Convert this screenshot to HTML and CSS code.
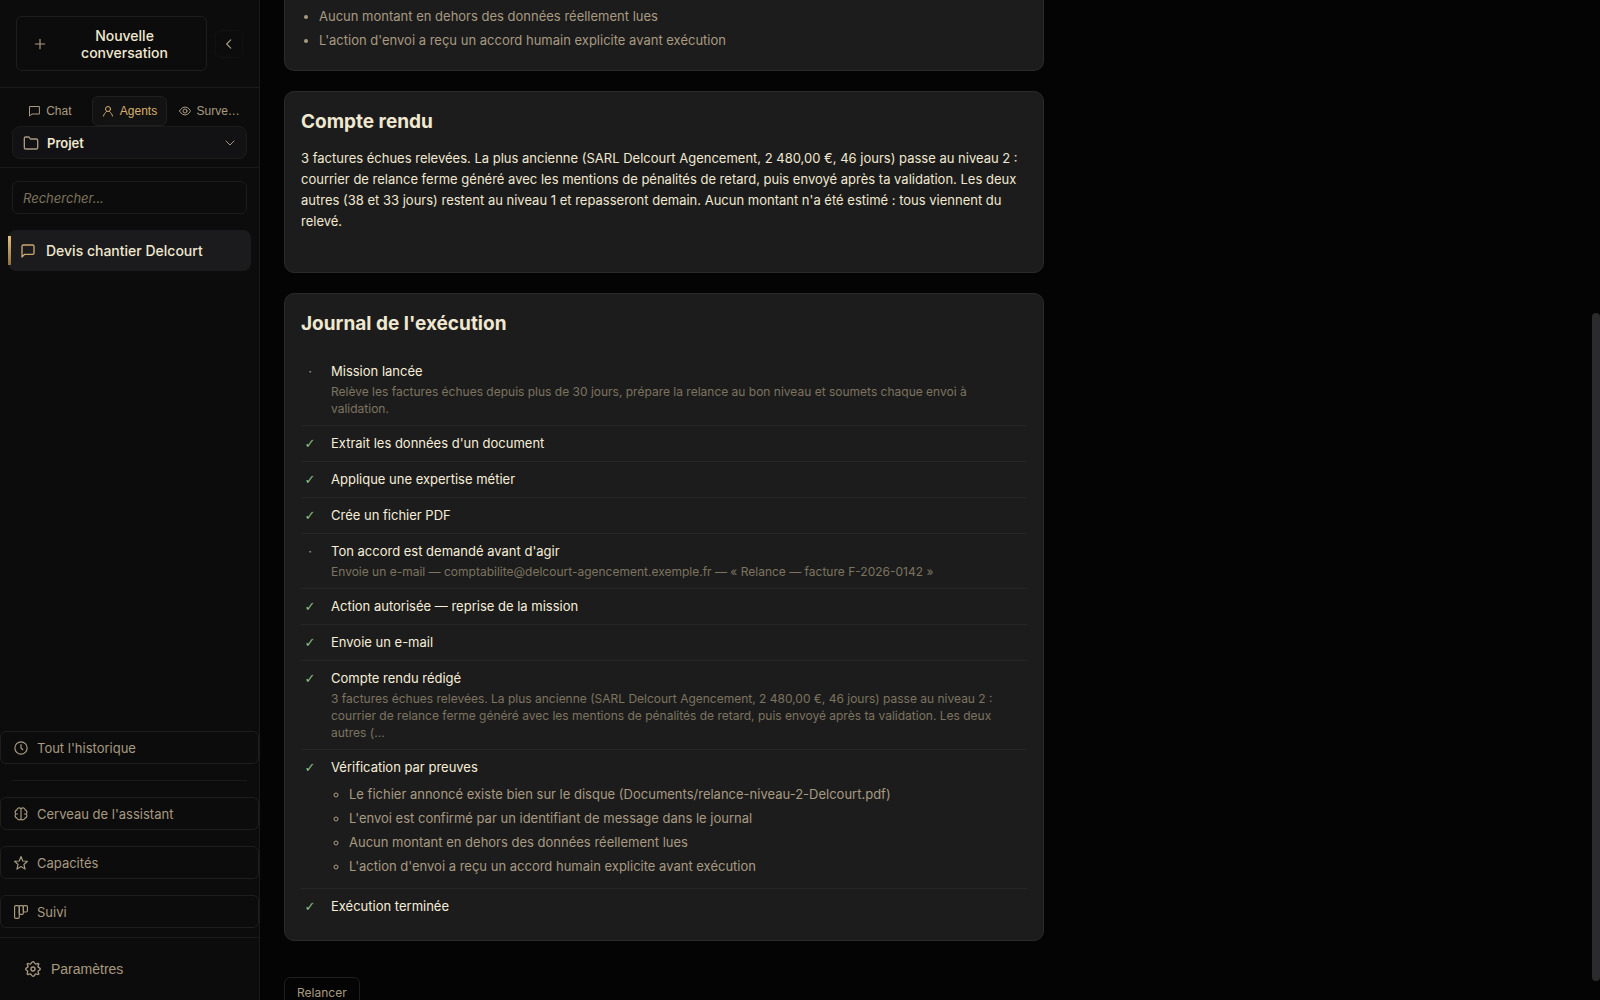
FILE: index.html
```html
<!DOCTYPE html>
<html lang="fr">
<head>
    <meta charset="UTF-8">
    <meta name="viewport" content="width=device-width, initial-scale=1.0">
    <title>Agents - Compte rendu</title>
    <link rel="stylesheet" href="styles.css">
</head>
<body>
    <aside class="sidebar">
        <div class="sidebar-header">
            <button class="new-chat" type="button">
                <svg class="icon" viewBox="0 0 24 24"><path d="M12 4v16M4 12h16"/></svg>
                <span>Nouvelle conversation</span>
            </button>
            <button class="collapse" type="button" aria-label="Réduire">
                <svg class="icon" viewBox="0 0 24 24"><path d="M15 5l-7 7 7 7"/></svg>
            </button>
        </div>

        <div class="sidebar-modes">
            <nav class="tabs">
                <button class="tab" type="button">
                    <svg class="icon" viewBox="0 0 24 24"><path d="M22 3H3v19l5-4h14z"/></svg>
                    <span>Chat</span>
                </button>
                <button class="tab active" type="button">
                    <svg class="icon" viewBox="0 0 24 24"><circle cx="12" cy="8" r="5"/><path d="M3 22c1-4 3-6 6-9M21 22c-1-4-3-6-6-9"/></svg>
                    <span>Agents</span>
                </button>
                <button class="tab" type="button">
                    <svg class="icon" viewBox="0 0 24 24"><path d="M1 12s4-8 11-8 11 8 11 8-4 8-11 8S1 12 1 12z"/><circle cx="12" cy="12" r="4"/></svg>
                    <span>Surve…</span>
                </button>
            </nav>
            <button class="project" type="button">
                <svg class="icon" viewBox="0 0 24 24"><path d="M22 19a2 2 0 0 1-2 2H4a2 2 0 0 1-2-2V5a2 2 0 0 1 2-2h5l2 3h9a2 2 0 0 1 2 2z"/></svg>
                <span>Projet</span>
                <svg class="icon chevron" viewBox="0 0 24 24"><path d="M4 8l8 8 8-8"/></svg>
            </button>
        </div>

        <input class="search" type="text" placeholder="Rechercher..." aria-label="Rechercher">

        <a class="conversation" href="#">
            <svg class="icon" viewBox="0 0 24 24"><path d="M21 15a2 2 0 0 1-2 2H7l-4 4V5a2 2 0 0 1 2-2h14a2 2 0 0 1 2 2z"/></svg>
            <span>Devis chantier Delcourt</span>
        </a>

        <div class="sidebar-links">
            <button class="side-link" type="button">
                <svg class="icon" viewBox="0 0 24 24"><circle cx="12" cy="12" r="10.5"/><path d="M12 6v6l3 3"/></svg>
                Tout l'historique
            </button>
            <hr>
            <button class="side-link" type="button">
                <svg class="icon" viewBox="0 0 24 24"><path d="M12 3v18M12 3C9 0 5 2 5 5 2 6 1 9 3 12c-2 3-1 6 2 7 1 3 5 4 7 2M12 3c3-3 7-1 7 2 3 1 4 4 2 7 2 3 1 6-2 7-1 3-5 4-7 2M3 12h3M18 12h3"/></svg>
                Cerveau de l'assistant
            </button>
            <button class="side-link" type="button">
                <svg class="icon" viewBox="0 0 24 24"><path d="M12 1l3 7.500 8 .5-6 5.500 2 8-7-4.500-7 4.500 2-8L1 9l8-.5z"/></svg>
                Capacités
            </button>
            <button class="side-link" type="button">
                <svg class="icon" viewBox="0 0 24 24"><rect x="1" y="1" width="8" height="22" rx="2"/><rect x="9" y="1" width="7" height="15" rx="2"/><rect x="16" y="1" width="7" height="11" rx="2"/></svg>
                Suivi
            </button>
        </div>

        <div class="sidebar-footer">
            <button class="settings" type="button">
                <svg class="icon" viewBox="0 0 24 24"><circle cx="12" cy="12" r="3"/><path d="M12 1c2 0 2 3 4 3.500s3.500-1.500 4.500-.5S19 7 19.500 8.500 23 10 23 12s-3 2-3.500 3.500 2 3.500 1 4.500-3-1-4.500-.5S14 23 12 23s-2-3-4-3.500-3.500 1.500-4.500.5 1-3 .5-4.500S1 14 1 12s3-2 3.500-3.500-2-3.500-1-4.500 3 1 4.500.5S10 1 12 1z"/></svg>
                Paramètres
            </button>
        </div>
    </aside>

    <main class="content">
        <section class="card card-cut">
            <ul class="proofs">
                <li>Aucun montant en dehors des données réellement lues</li>
                <li>L'action d'envoi a reçu un accord humain explicite avant exécution</li>
            </ul>
        </section>

        <section class="card">
            <h2>Compte rendu</h2>
            <p class="report">3 factures échues relevées. La plus ancienne (SARL Delcourt Agencement, 2 480,00 €, 46 jours) passe au niveau 2 : courrier de relance ferme généré avec les mentions de pénalités de retard, puis envoyé après ta validation. Les deux autres (38 et 33 jours) restent au niveau 1 et repasseront demain. Aucun montant n'a été estimé : tous viennent du relevé.</p>
        </section>

        <section class="card">
            <h2>Journal de l'exécution</h2>
            <ul class="log">
                <li>
                    <span class="mark">·</span>
                    <div>
                        <div class="step">Mission lancée</div>
                        <div class="detail">Relève les factures échues depuis plus de 30 jours, prépare la relance au bon niveau et soumets chaque envoi à validation.</div>
                    </div>
                </li>
                <li>
                    <span class="mark ok">✓</span>
                    <div class="step">Extrait les données d'un document</div>
                </li>
                <li>
                    <span class="mark ok">✓</span>
                    <div class="step">Applique une expertise métier</div>
                </li>
                <li>
                    <span class="mark ok">✓</span>
                    <div class="step">Crée un fichier PDF</div>
                </li>
                <li>
                    <span class="mark">·</span>
                    <div>
                        <div class="step">Ton accord est demandé avant d'agir</div>
                        <div class="detail">Envoie un e-mail — comptabilite@delcourt-agencement.exemple.fr — « Relance — facture F-2026-0142 »</div>
                    </div>
                </li>
                <li>
                    <span class="mark ok">✓</span>
                    <div class="step">Action autorisée — reprise de la mission</div>
                </li>
                <li>
                    <span class="mark ok">✓</span>
                    <div class="step">Envoie un e-mail</div>
                </li>
                <li>
                    <span class="mark ok">✓</span>
                    <div>
                        <div class="step">Compte rendu rédigé</div>
                        <div class="detail">3 factures échues relevées. La plus ancienne (SARL Delcourt Agencement, 2 480,00 €, 46 jours) passe au niveau 2 : courrier de relance ferme généré avec les mentions de pénalités de retard, puis envoyé après ta validation. Les deux autres (…</div>
                    </div>
                </li>
                <li>
                    <span class="mark ok">✓</span>
                    <div>
                        <div class="step">Vérification par preuves</div>
                        <ul class="proofs">
                            <li>Le fichier annoncé existe bien sur le disque (Documents/relance-niveau-2-Delcourt.pdf)</li>
                            <li>L'envoi est confirmé par un identifiant de message dans le journal</li>
                            <li>Aucun montant en dehors des données réellement lues</li>
                            <li>L'action d'envoi a reçu un accord humain explicite avant exécution</li>
                        </ul>
                    </div>
                </li>
                <li>
                    <span class="mark ok">✓</span>
                    <div class="step">Exécution terminée</div>
                </li>
            </ul>
        </section>

        <button class="rerun" type="button">Relancer</button>
        <div class="scroll-thumb"></div>
    </main>
</body>
</html>
```
FILE: styles.css
```css
* {
    box-sizing: border-box;
}
body {
    margin: 0;
    display: flex;
    height: 100vh;
    overflow: hidden;
    background: #040404;
    color: #f0e8d0;
    font-family: Inter, sans-serif;
    font-size: 13px;
}
button {
    background: none;
    border: 1px solid #1e1e1d;
    border-radius: 6px;
    color: #a89a80;
    font-family: inherit;
    cursor: pointer;
}
.icon {
    width: 14px;
    height: 14px;
    flex-shrink: 0;
    fill: none;
    stroke: currentColor;
    stroke-width: 2;
    stroke-linecap: round;
    stroke-linejoin: round;
}

/* Sidebar */
.sidebar {
    width: 260px;
    flex-shrink: 0;
    display: flex;
    flex-direction: column;
    background: #0c0c0c;
    border-right: 1px solid #1a1a1a;
}
.sidebar-header {
    display: flex;
    align-items: center;
    gap: 8px;
    padding: 16px;
    border-bottom: 1px solid #1c1c1c;
}
.new-chat {
    flex: 1;
    height: 55px;
    display: flex;
    align-items: center;
    gap: 12px;
    padding: 0 16px;
    color: #f0e8d0;
    font-size: 14px;
    font-weight: 500;
    line-height: 17px;
}
.new-chat span {
    flex: 1;
}
.new-chat .icon {
    color: #a89a80;
}
.collapse {
    width: 28px;
    height: 28px;
    padding: 0;
    border-color: #121212;
}
.collapse .icon {
    display: block;
    margin: 0 auto;
}
.sidebar-modes {
    padding: 8px 12px;
    border-bottom: 1px solid #1a1a1a;
}
.tabs {
    display: flex;
    gap: 4px;
}
.tab {
    flex: 1;
    min-width: 0;
    height: 30px;
    display: flex;
    align-items: center;
    justify-content: center;
    gap: 6px;
    padding: 0 6px;
    border-color: transparent;
    font-family: "Liberation Sans", Arial, sans-serif;
    font-size: 12px;
    white-space: nowrap;
}
.tab .icon {
    width: 12px;
    height: 12px;
}
.tab.active {
    background: #121212;
    border-color: #202020;
    color: #d8ae6c;
}
.project {
    width: 100%;
    height: 33px;
    display: flex;
    align-items: center;
    gap: 8px;
    padding: 0 10px;
    background: #121214;
    border-color: #1c1c1c;
    border-radius: 8px;
    color: #f0e8d0;
    font-size: 13px;
    font-weight: 600;
}
.project .icon {
    width: 16px;
    height: 16px;
    color: #a89a80;
}
.project .chevron {
    width: 12px;
    height: 12px;
    margin-left: auto;
}
.search {
    height: 33px;
    margin: 13px 12px 16px;
    padding: 0 10px;
    background: none;
    border: 1px solid #1c1c1c;
    border-radius: 6px;
    color: #f0e8d0;
    font-family: inherit;
    font-size: 13px;
}
.search::placeholder {
    color: #7d745c;
    font-style: italic;
}
.conversation {
    position: relative;
    height: 41px;
    display: flex;
    align-items: center;
    gap: 10px;
    margin: 0 8px;
    padding: 0 12px;
    background: #1b1b1d;
    border-radius: 8px;
    color: #f0e8d0;
    font-size: 14px;
    font-weight: 500;
    text-decoration: none;
}
.conversation::before {
    content: "";
    position: absolute;
    left: 0;
    top: 6px;
    bottom: 6px;
    width: 3px;
    background: linear-gradient(#e6bf7c, #8f7040);
}
.conversation .icon {
    width: 16px;
    height: 16px;
    color: #c9a873;
}
.sidebar-links {
    display: flex;
    flex-direction: column;
    gap: 16px;
    margin-top: auto;
    padding-bottom: 9px;
}
.sidebar-links hr {
    width: calc(100% - 24px);
    margin: 0 auto;
    border: 0;
    border-top: 1px solid #1a1a1a;
}
.side-link {
    height: 33px;
    display: flex;
    align-items: center;
    gap: 9px;
    padding: 0 13px;
    font-size: 13px;
}
.sidebar-footer {
    padding: 12px;
    border-top: 1px solid #1a1a1a;
}
.settings {
    height: 38px;
    display: flex;
    align-items: center;
    gap: 10px;
    padding: 0 13px;
    border: 0;
    font-family: "Liberation Sans", Arial, sans-serif;
    font-size: 14px;
}
.settings .icon {
    width: 16px;
    height: 16px;
}

/* Content */
.content {
    position: relative;
    flex: 1;
    padding: 0 24px;
    overflow: hidden;
}
.card {
    max-width: 760px;
    margin-bottom: 20px;
    padding: 16px;
    background: #1c1c1d;
    border: 1px solid #2a2a2a;
    border-radius: 10px;
}
.card-cut {
    padding-top: 6px;
    border-top: 0;
    border-radius: 0 0 10px 10px;
}
h2 {
    margin: 0 0 12px;
    font-size: 19px;
    font-weight: 700;
    line-height: 28px;
}
.report {
    margin: 0 0 24px;
    line-height: 21px;
}
.proofs {
    margin: 0;
    padding-left: 18px;
    color: #a89a80;
    line-height: 20px;
}
.proofs li {
    margin-bottom: 4px;
}
.card-cut .proofs {
    margin-bottom: 4px;
}
.log {
    margin: 16px 0 0;
    padding: 0;
    list-style: none;
}
.log > li {
    display: flex;
    gap: 12px;
    padding: 8px 0;
    border-bottom: 1px solid #262627;
    line-height: 19px;
}
.log > li:last-child {
    border-bottom: 0;
}
.log .proofs {
    margin-top: 7px;
    list-style: circle;
}
.mark {
    width: 18px;
    flex-shrink: 0;
    color: #a89a80;
    text-align: center;
}
.mark.ok {
    color: #8cc084;
    font-family: "DejaVu Sans", sans-serif;
}
.step {
    color: #f6eed8;
}
.detail {
    margin-top: 2px;
    color: #7d745f;
    font-size: 12px;
    line-height: 17px;
}
.rerun {
    height: 30px;
    margin-top: 16px;
    padding: 0 12px;
    font-size: 12px;
}

/* Scrollbar drawn over the content */
.scroll-thumb {
    position: absolute;
    top: 313px;
    right: 0;
    bottom: 19px;
    width: 8px;
    background: #2b2b2d;
    border-radius: 4px;
}
```
